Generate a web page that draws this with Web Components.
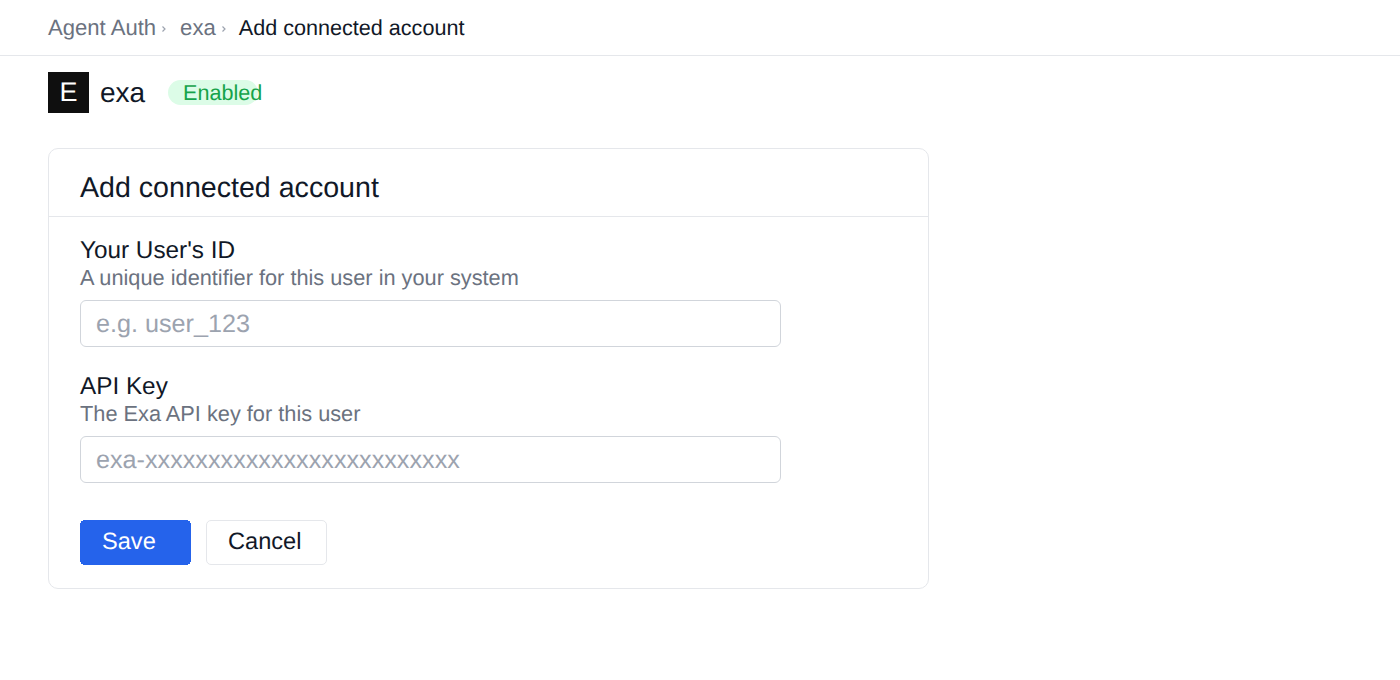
<!DOCTYPE html>
<html>
<head>
<meta charset="utf-8">
<title>Add connected account</title>
<style>
  html, body { margin: 0; padding: 0; background: #fff; }
  body { font-family: "Liberation Sans", Arial, sans-serif; color: #111827; text-rendering: geometricPrecision; }
</style>
</head>
<body>
<app-breadcrumb>
  <bread-link gap="13">Agent Auth</bread-link>
  <bread-link gap="12">exa</bread-link>
  <span>Add connected account</span>
</app-breadcrumb>
<provider-head name="exa" letter="E" status="Enabled"></provider-head>
<form-card heading="Add connected account">
  <form-field label="Your User's ID" hint="A unique identifier for this user in your system" placeholder="e.g. user_123"></form-field>
  <form-field label="API Key" hint="The Exa API key for this user" placeholder="exa-xxxxxxxxxxxxxxxxxxxxxxxxx"></form-field>
  <form-actions></form-actions>
</form-card>

<script>
class AppBreadcrumb extends HTMLElement {
  constructor() {
    super()
    this.attachShadow({ mode: 'open' }).innerHTML = `
      <style>
        :host {
          display: flex;
          align-items: center;
          height: 55px;
          padding-left: 48px;
          border-bottom: 1px solid #e5e7eb;
          font-size: 21.6px;
          color: #111827;
        }
      </style>
      <slot></slot>`
  }
}
customElements.define('app-breadcrumb', AppBreadcrumb)

class BreadLink extends HTMLElement {
  connectedCallback() {
    this.attachShadow({ mode: 'open' }).innerHTML = `
      <style>
        :host { display: inline-flex; align-items: center; color: #6b7280; font-size: 22.1px; margin-right: ${this.getAttribute('gap')}px; }
        svg { margin-left: 5px; margin-top: 2px; }
      </style>
      <slot></slot>
      <svg width="6" height="8" viewBox="0 0 6 8" fill="none" stroke="#9ca3af" stroke-width="1.2"><path d="M1.5 1.5 4 4 1.5 6.5"/></svg>`
  }
}
customElements.define('bread-link', BreadLink)

class ProviderHead extends HTMLElement {
  connectedCallback() {
    this.attachShadow({ mode: 'open' }).innerHTML = `
      <style>
        :host { display: flex; align-items: center; padding: 16px 48px 0; height: 41px; }
        .logo {
          width: 41px; height: 41px; background: #0f0f0f; color: #fff;
          display: flex; align-items: center; justify-content: center; font-size: 27px;
        }
        .name { margin-left: 11px; width: 46px; font-size: 28px; line-height: 38px; color: #111827; }
        .pill {
          margin-left: 22px; width: 90px; height: 25px; padding-left: 15px; box-sizing: border-box;
          background: #dcfce7; color: #16a34a; border-radius: 12.5px; font-size: 21.6px;
          line-height: 25px; white-space: nowrap;
        }
      </style>
      <div class="logo">${this.getAttribute('letter')}</div>
      <div class="name">${this.getAttribute('name')}</div>
      <div class="pill">${this.getAttribute('status')}</div>`
  }
}
customElements.define('provider-head', ProviderHead)

class FormCard extends HTMLElement {
  connectedCallback() {
    this.attachShadow({ mode: 'open' }).innerHTML = `
      <style>
        :host {
          display: block; box-sizing: border-box; width: 881px; margin: 35px 0 0 48px;
          border: 1px solid #e5e7eb; border-radius: 10px; background: #fff;
        }
        h2 {
          margin: 0; height: 68px; line-height: 78px; padding-left: 31px; box-sizing: border-box;
          border-bottom: 1px solid #e5e7eb; font-size: 28.6px; font-weight: 400; color: #111827;
        }
        .body { padding: 20px 31px 23px; display: flex; flex-direction: column; }
      </style>
      <h2>${this.getAttribute('heading')}</h2>
      <div class="body"><slot></slot></div>`
  }
}
customElements.define('form-card', FormCard)

class FormField extends HTMLElement {
  connectedCallback() {
    this.attachShadow({ mode: 'open' }).innerHTML = `
      <style>
        :host { display: block; margin-bottom: 26px; }
        label { display: block; font-size: 24.3px; line-height: 27px; color: #111827; }
        .hint { font-size: 21.75px; line-height: 27px; color: #6b7280; margin-bottom: 9px; }
        input {
          display: block; box-sizing: border-box; width: 701px; height: 47px; padding: 2px 15px 0;
          border: 1px solid #d1d5db; border-radius: 6px; font: inherit; font-size: 25.2px; outline: none;
          text-rendering: geometricPrecision;
        }
        input::placeholder { color: #9ca3af; opacity: 1; }
      </style>
      <label>${this.getAttribute('label')}</label>
      <div class="hint">${this.getAttribute('hint')}</div>
      <input placeholder="${this.getAttribute('placeholder')}">`
  }
}
customElements.define('form-field', FormField)

class FormActions extends HTMLElement {
  constructor() {
    super()
    this.attachShadow({ mode: 'open' }).innerHTML = `
      <style>
        :host { display: flex; gap: 15px; margin-top: 11px; }
        button {
          height: 45px; font: inherit; font-size: 23.6px; padding: 0; border-radius: 5px;
          text-align: left; text-rendering: geometricPrecision;
        }
        .save {
          width: 111px; padding-left: 22px; background: #2563eb; color: #fff; border: 0; border-radius: 0;
          /* the reference has stepped corners here, not a smooth radius */
          clip-path: polygon(
            0 3px, 1px 3px, 1px 1px, 3px 1px, 3px 0,
            108px 0, 108px 1px, 110px 1px, 110px 3px, 111px 3px,
            111px 42px, 110px 42px, 110px 44px, 108px 44px, 108px 45px,
            3px 45px, 3px 44px, 1px 44px, 1px 42px, 0 42px);
        }
        .cancel { width: 121px; padding-left: 21px; background: #fff; color: #111827; border: 1px solid #e5e7eb; }
      </style>
      <button class="save">Save</button>
      <button class="cancel">Cancel</button>`
  }
}
customElements.define('form-actions', FormActions)
</script>
</body>
</html>
